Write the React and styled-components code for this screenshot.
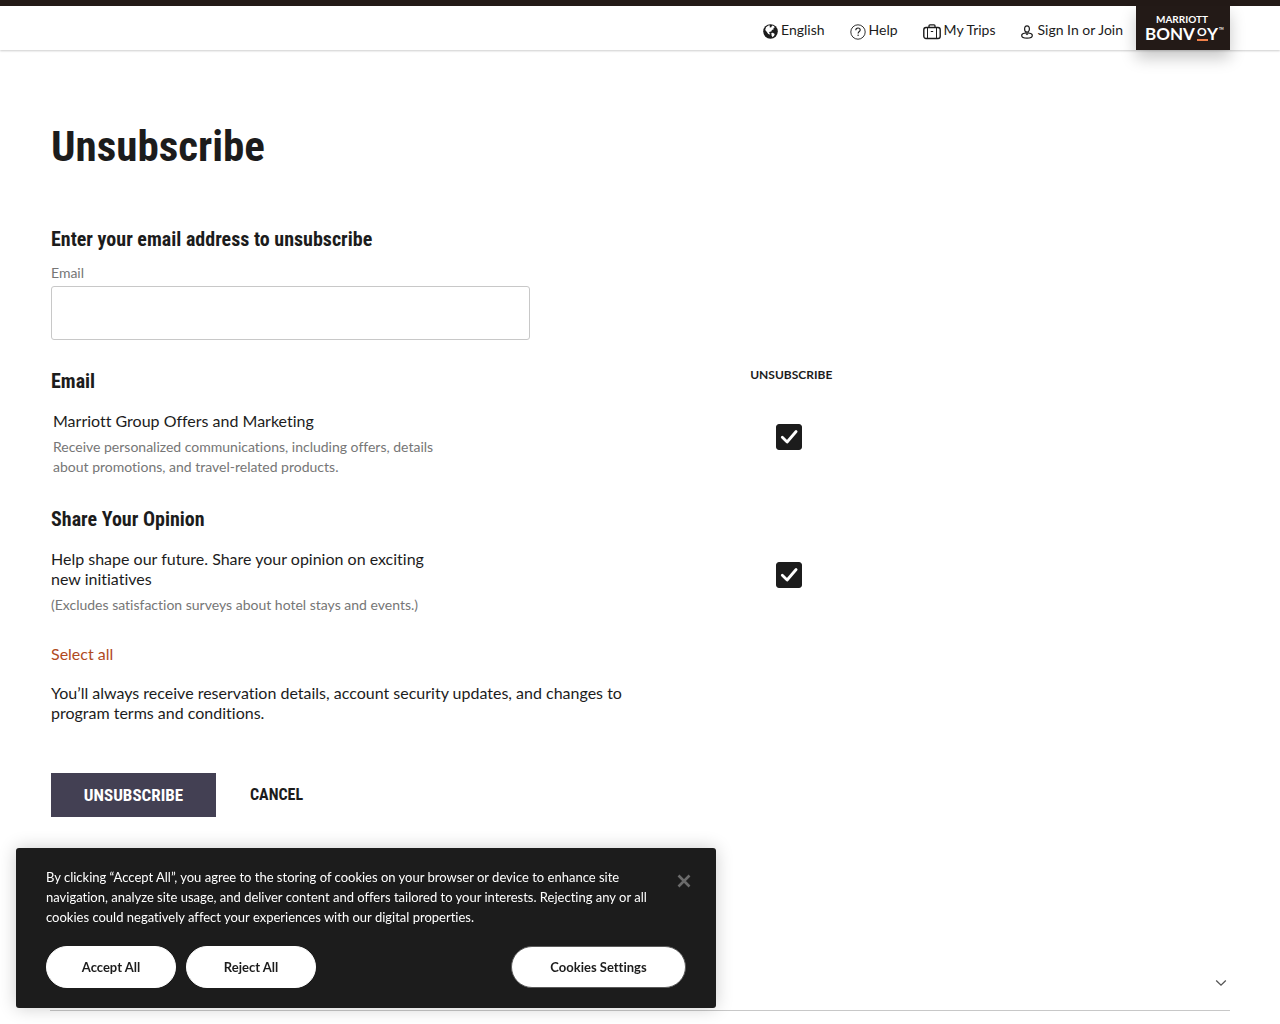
import React, { useState } from 'react'
import styled, { createGlobalStyle } from 'styled-components'

const GlobalStyle = createGlobalStyle`
    * {
        box-sizing: border-box;
    }
    body {
        margin: 0;
        background-color: white;
        color: #1c1c1c;
        font-family: Lato, "Open Sans", sans-serif;
        font-size: 16px;
        font-variant-ligatures: none;
        line-height: 20px;
    }
`

const condensed = '"Roboto Condensed", "Liberation Sans Narrow", "Liberation Sans", sans-serif'

const Container = styled.div``

/* Header */
const Header = styled.header`
    display: flex;
    justify-content: flex-end;
    height: 50px;
    padding: 0 50px;
    border-top: 6px solid #231a17;
    box-shadow: 0 1px 2px rgba(0, 0, 0, 0.2);
`
const Nav = styled.nav`
    display: flex;
    align-items: center;
    gap: 25px;
    margin-right: 13px;
    padding-top: 3px;
`
const NavLink = styled.a`
    display: flex;
    align-items: center;
    gap: 3px;
    color: #1c1c1c;
    font-size: 14px;
    text-decoration: none;

    svg {
        margin-top: 4px;
    }
`
const Logo = styled.a`
    width: 94px;
    height: 44px;
    background-color: #231a17;
    box-shadow: 0 8px 16px rgba(0, 0, 0, 0.22);

    svg {
        display: block;
    }
`

/* Form */
const Main = styled.main`
    padding: 68px 51px 0;
`
const Title = styled.h1`
    margin: 0 0 51px;
    font-family: ${condensed};
    font-size: 43px;
    line-height: 56px;
`
const Subtitle = styled.h2`
    margin: 0;
    font-family: ${condensed};
    font-size: 20px;
    line-height: 28px;
`
const Field = styled.div`
    display: flex;
    flex-direction: column;
    gap: 3px;
    max-width: 479px;
    margin: 10px 0 27px;
`
const Label = styled.label`
    color: #767676;
    font-size: 14px;
`
const Input = styled.input`
    height: 54px;
    padding: 0 16px;
    border: 1px solid #c8c8c8;
    border-radius: 3px;
    font: inherit;
`
const Row = styled.div`
    display: grid;
    grid-template-columns: 7fr 5fr;
    margin-bottom: ${ props => props.$spaced ? "28px" : "16px" };
`
const Option = styled.div`
    max-width: 400px;
    padding-left: ${ props => props.$inset ? "2px" : "0" };
`
const OptionName = styled.label`
    display: block;
    margin-bottom: 6px;
`
const OptionText = styled.p`
    margin: 0;
    color: #767676;
    font-size: 14px;
`
const ColumnHeading = styled.span`
    padding-left: 12px;
    font-size: 12px;
    font-weight: 700;
    line-height: 16px;
`
const Choice = styled.div`
    display: flex;
    justify-content: center;
    width: 90px;
    padding: 13px 0 0 12px;
`
const CheckWrapper = styled.span`
    position: relative;
    width: 26px;
    height: 26px;

    svg {
        position: absolute;
        inset: 0;
        pointer-events: none;
    }
`
const Checkbox = styled.input`
    appearance: none;
    display: block;
    width: 26px;
    height: 26px;
    margin: 0;
    border: 1px solid #1c1c1c;
    border-radius: 3px;
    cursor: pointer;

    &:checked {
        background-color: #1c1c1c;
    }
`
const SelectAll = styled.a`
    display: inline-block;
    margin: 13px 0 19px;
    color: #b04a1e;
    text-decoration: none;
`
const Note = styled.p`
    max-width: 590px;
    margin: 0 0 50px;
`
const Actions = styled.div`
    display: flex;
    align-items: center;
    gap: 34px;
`
const SubmitButton = styled.button`
    width: 165px;
    height: 44px;
    border: none;
    background-color: #434053;
    color: white;
    font-family: ${condensed};
    font-size: 17px;
    font-weight: 700;
    cursor: pointer;
`
const CancelLink = styled.a`
    color: #1c1c1c;
    font-family: ${condensed};
    font-size: 16px;
    font-weight: 700;
    text-decoration: none;
`

/* Footer */
const Footer = styled.footer`
    margin: 138px 50px 0;
`
const FooterToggle = styled.button`
    display: flex;
    align-items: center;
    justify-content: flex-end;
    width: 100%;
    height: 56px;
    padding: 0 3px;
    border: none;
    border-bottom: 1px solid #c8c8c8;
    background: none;
`

/* Cookies */
const Banner = styled.section`
    position: fixed;
    left: 16px;
    bottom: 16px;
    width: 700px;
    max-width: calc(100% - 32px);
    padding: 19px 30px 20px;
    border-radius: 3px;
    background-color: #1c1c1c;
    box-shadow: 0 0 18px rgba(0, 0, 0, 0.2);
    color: white;
`
const BannerTop = styled.div`
    display: flex;
    align-items: flex-start;
    justify-content: space-between;
    margin-bottom: 19px;
`
const BannerText = styled.p`
    max-width: 612px;
    margin: 0;
    font-size: 13px;
`
const CloseButton = styled.button`
    display: flex;
    margin: 7px -5px 0 0;
    padding: 0;
    border: none;
    background: none;
    cursor: pointer;
`
const BannerActions = styled.div`
    display: flex;
    gap: 10px;
`
const BannerButton = styled.button`
    width: ${ props => props.$settings ? "175px" : "130px" };
    height: 42px;
    margin-left: ${ props => props.$settings ? "auto" : "0" };
    border: 1px solid ${ props => props.$settings ? "#5a5a5a" : "white" };
    border-radius: 21px;
    background-color: white;
    color: #1c1c1c;
    font-family: inherit;
    font-size: 13px;
    font-weight: 700;
    font-variant-ligatures: none;
    cursor: pointer;
`

const GlobeIcon = () => (
    <svg width="15" height="15" viewBox="0 0 15 15">
        <circle cx="7.5" cy="7.5" r="7.3" fill="#1c1c1c"/>
        <path d="M3 3.2 5.4 1.4 7 1.6l-.4 1.6 1.5.2 1-1.8 1.8.5.9 1.3-1.5.5.5 1.4-1.9.7-.6 1.5-1.5.3-.9 1.1 1.4.9-.3.8-1.8-.6-1.5-2.2L2.2 6z" fill="white"/>
        <path d="m8.3 9 1.6-.2 1.8 1.3-.6 1.6-1.6 1.5-.9-1.7z" fill="white"/>
    </svg>
)

const HelpIcon = () => (
    <svg width="16" height="16" viewBox="0 0 16 16" fill="none" stroke="#1c1c1c">
        <circle cx="8" cy="8" r="7.2" strokeWidth="0.9"/>
        <path d="M5.8 6.3c0-1.5 1-2.3 2.2-2.3s2.2.8 2.2 2c0 1.5-2.1 1.6-2.1 3.5" strokeWidth="1.1"/>
        <circle cx="8.1" cy="11.3" r="0.7" fill="#1c1c1c" stroke="none"/>
    </svg>
)

const TripsIcon = () => (
    <svg width="18" height="16" viewBox="0 0 18 16" fill="none" stroke="#1c1c1c">
        <rect x="0.8" y="3.5" width="16.4" height="11" rx="2.2" strokeWidth="1.4"/>
        <path d="M6 3.3V1.7Q6 .8 7 .8h4q1 0 1 .9v1.6" strokeWidth="1.3"/>
        <path d="M4.5 3.5v11M13.5 3.5v11M7.8 7.5h2.4"/>
    </svg>
)

const UserIcon = () => (
    <svg width="14" height="14" viewBox="0 0 14 14" fill="none" stroke="#1c1c1c" strokeWidth="1.2">
        <ellipse cx="6" cy="4" rx="2.4" ry="3.2"/>
        <path d="M4.9 6.8v1.7l1.1.9 1.1-.9V6.8M3.9 8.2C1.8 8.5.7 9.4.7 10.5c0 1.6 2.2 2.6 5.3 2.6s5.3-1 5.3-2.6c0-1.1-1.1-2-3.2-2.3"/>
    </svg>
)

const BonvoyLogo = () => (
    <svg width="94" height="44" viewBox="0 0 94 44" fill="white" fontFamily="Lato, sans-serif" fontWeight="700">
        <text x="46" y="17" fontSize="10" textAnchor="middle">MARRIOTT</text>
        <text x="9" y="34" fontSize="17">BONV</text>
        <text x="61" y="30" fontSize="12">O</text>
        <text x="71" y="34" fontSize="17">Y</text>
        <text x="83" y="24" fontSize="3">TM</text>
        <rect x="61" y="33" width="11" height="2" fill="#f0814a"/>
    </svg>
)

const Check = ({ id, checked, onChange }) => (
    <CheckWrapper>
        <Checkbox id={ id } type="checkbox" checked={ checked } onChange={ onChange }/>
        <svg width="26" height="26" viewBox="0 0 26 26" fill="none" stroke="white" strokeWidth="2.8" strokeLinecap="round" strokeLinejoin="round">
            <path d="m6.3 13.3 4.8 4.7 9-10.5"/>
        </svg>
    </CheckWrapper>
)

const App = () => {

    const [email, setEmail] = useState("")
    const [offers, setOffers] = useState(true)
    const [opinion, setOpinion] = useState(true)
    const [banner, setBanner] = useState(true)

    const selectAll = (e) => {
        e.preventDefault()
        setOffers(true)
        setOpinion(true)
    }

    return (
        <Container>
            <GlobalStyle/>
            <Header>
                <Nav>
                    <NavLink href="#language"><GlobeIcon/>English</NavLink>
                    <NavLink href="#help"><HelpIcon/>Help</NavLink>
                    <NavLink href="#trips"><TripsIcon/>My Trips</NavLink>
                    <NavLink href="#signin"><UserIcon/>Sign In or Join</NavLink>
                </Nav>
                <Logo href="#home"><BonvoyLogo/></Logo>
            </Header>
            <Main>
                <Title>Unsubscribe</Title>
                <Subtitle>Enter your email address to unsubscribe</Subtitle>
                <Field>
                    <Label htmlFor="email">Email</Label>
                    <Input id="email" type="email" value={ email } onChange={ (e) => setEmail(e.target.value) }/>
                </Field>
                <Row>
                    <Subtitle>Email</Subtitle>
                    <ColumnHeading>UNSUBSCRIBE</ColumnHeading>
                </Row>
                <Row $spaced>
                    <Option $inset>
                        <OptionName htmlFor="offers">Marriott Group Offers and Marketing</OptionName>
                        <OptionText>Receive personalized communications, including offers, details about promotions, and travel-related products.</OptionText>
                    </Option>
                    <Choice><Check id="offers" checked={ offers } onChange={ () => setOffers(!offers) }/></Choice>
                </Row>
                <Row>
                    <Subtitle>Share Your Opinion</Subtitle>
                </Row>
                <Row>
                    <Option>
                        <OptionName htmlFor="opinion">Help shape our future. Share your opinion on exciting new initiatives</OptionName>
                        <OptionText>(Excludes satisfaction surveys about hotel stays and events.)</OptionText>
                    </Option>
                    <Choice><Check id="opinion" checked={ opinion } onChange={ () => setOpinion(!opinion) }/></Choice>
                </Row>
                <SelectAll href="#all" onClick={ selectAll }>Select all</SelectAll>
                <Note>You’ll always receive reservation details, account security updates, and changes to program terms and conditions.</Note>
                <Actions>
                    <SubmitButton type="button">UNSUBSCRIBE</SubmitButton>
                    <CancelLink href="#cancel">CANCEL</CancelLink>
                </Actions>
            </Main>
            <Footer>
                <FooterToggle type="button" aria-label="More">
                    <svg width="12" height="8" viewBox="0 0 12 8" fill="none" stroke="#555" strokeWidth="1.3">
                        <path d="m1.2 1.5 4.8 4.7 4.8-4.7"/>
                    </svg>
                </FooterToggle>
            </Footer>
            { banner && (
                <Banner>
                    <BannerTop>
                        <BannerText>By clicking “Accept All”, you agree to the storing of cookies on your browser or device to enhance site navigation, analyze site usage, and deliver content and offers tailored to your interests. Rejecting any or all cookies could negatively affect your experiences with our digital properties.</BannerText>
                        <CloseButton type="button" aria-label="Close" onClick={ () => setBanner(false) }>
                            <svg width="14" height="14" viewBox="0 0 14 14" stroke="#6b6b6b" strokeWidth="2.6">
                                <path d="m1.5 1.5 11 11M12.5 1.5l-11 11"/>
                            </svg>
                        </CloseButton>
                    </BannerTop>
                    <BannerActions>
                        <BannerButton type="button">Accept All</BannerButton>
                        <BannerButton type="button">Reject All</BannerButton>
                        <BannerButton type="button" $settings>Cookies Settings</BannerButton>
                    </BannerActions>
                </Banner>
            )}
        </Container>
    )
}

export default App
